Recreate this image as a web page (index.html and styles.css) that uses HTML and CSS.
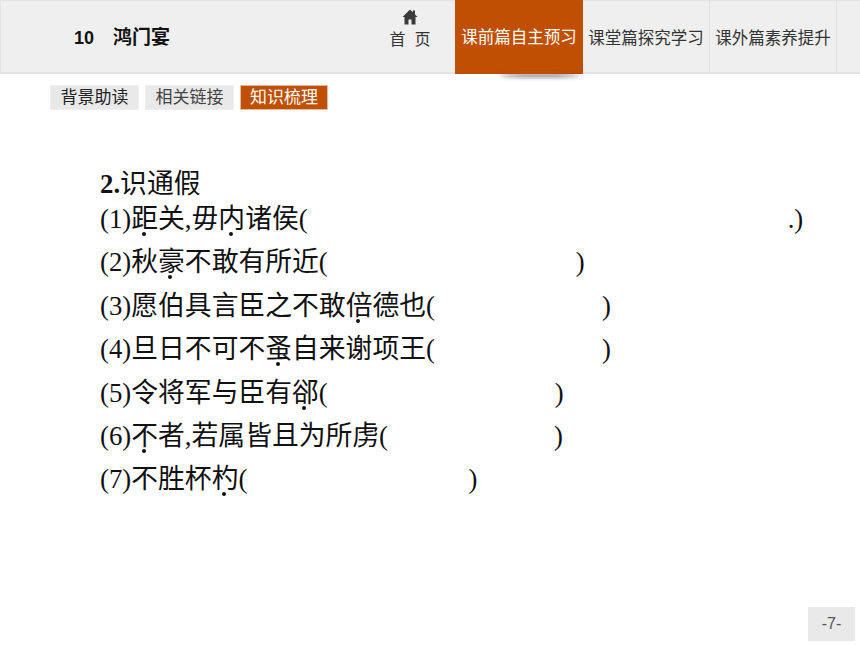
FILE: index.html
```html
<!DOCTYPE html>
<html lang="zh">
<head>
<meta charset="utf-8">
<title>鸿门宴</title>
<link rel="stylesheet" href="styles.css">
</head>
<body>
<header class="topbar">
  <div class="title"><span class="num">10</span><span>鸿门宴</span></div>
  <div class="home">
    <svg class="home-icon" viewBox="0 0 16 16" width="16" height="16"><path fill="#3a3a3a" d="M8 .5 .5 8h2v7.500h4V10.500h3v5h4V8h2L13 5.500V1.500h-2.200v1.800z"/></svg>
    <span class="home-label">首&nbsp;&nbsp;页</span>
  </div>
  <nav class="tabs">
    <div class="tab active">课前篇自主预习</div>
    <div class="tab">课堂篇探究学习</div>
    <div class="tab bordered">课外篇素养提升</div>
    <div class="tab-end"></div>
  </nav>
</header>
<div class="subtabs">
  <div class="subtab">背景助读</div>
  <div class="subtab muted">相关链接</div>
  <div class="subtab on">知识梳理</div>
</div>
<main class="content">
  <h2 class="heading"><b>2.</b>识通假</h2>
  <p class="line">(1)<i class="d">距</i>关,毋<i class="d">内</i>诸侯(<span class="blank b1"></span>.)</p>
  <p class="line">(2)秋<i class="d">豪</i>不敢有所近(<span class="blank b2"></span>)</p>
  <p class="line">(3)愿伯具言臣之不敢<i class="d">倍</i>德也(<span class="blank b3"></span>)</p>
  <p class="line">(4)旦日不可不<i class="d">蚤</i>自来谢项王(<span class="blank b3"></span>)</p>
  <p class="line">(5)令将军与臣有<i class="d">郤</i>(<span class="blank b5"></span>)</p>
  <p class="line">(6)<i class="d">不</i>者,若属皆且为所虏(<span class="blank b6"></span>)</p>
  <p class="line">(7)不胜杯<i class="d">杓</i>(<span class="blank b7"></span>)</p>
</main>
<div class="page">-7-</div>
</body>
</html>
```
FILE: styles.css
```css
* { box-sizing: border-box; }
html, body { margin: 0; padding: 0; }
body {
  width: 860px;
  height: 645px;
  background: #fff;
  font-family: "Liberation Sans", "Noto Sans CJK SC", sans-serif;
  overflow: hidden;
  position: relative;
}
.topbar {
  height: 74px;
  background: #efefef;
  border: 1px solid #e4e4e4;
  border-width: 1px 0 2px 1px;
  display: flex;
  align-items: stretch;
}
.title {
  width: 367px;
  padding: 22px 0 0 73px;
  font-size: 19px;
  line-height: 30px;
  font-weight: bold;
  color: #111;
  display: flex;
}
.num { width: 39px; font-size: 18px; }
.home {
  width: 87px;
  display: flex;
  flex-direction: column;
  align-items: center;
  padding-top: 8px;
  padding-right: 3px;
}
.home-icon { display: block; }
.home-label { font-size: 16px; line-height: 22px; color: #333; margin-top: 4px; }
.tabs { display: flex; flex: 1; }
.tab {
  width: 127px;
  margin-top: -1px;
  height: 73px;
  font-size: 16.500px;
  color: #333;
  display: flex;
  align-items: center;
  justify-content: center;
  border-right: 1px solid #e0e0e0;
  white-space: nowrap;
}
.tab.active {
  width: 128px;
  height: 74px;
  background: #c04f02;
  color: #fff;
  border-right: 0;
  padding-bottom: 2px;
  position: relative;
}
.tab.active::after {
  content: "";
  position: absolute;
  left: 40px;
  right: 6px;
  bottom: 0;
  height: 3px;
  border-radius: 50%;
  box-shadow: 4px 3px 4px rgba(0, 0, 0, .6);
}
.tab-end { flex: 1; }
.subtabs {
  display: flex;
  gap: 6px;
  margin: 11px 0 0 50px;
}
.subtab {
  width: 89px;
  height: 25px;
  background: #e9e9e9;
  border: 1px solid #eeeeee;
  font-size: 17px;
  line-height: 24px;
  text-align: center;
  color: #222;
}
.subtab.muted { color: #444; }
.subtab.on { width: 88px; background: #c04f02; border-color: #e0b9a0; color: #fff; }
.content {
  margin: 59px 0 0 100px;
  font-family: "Liberation Serif", "Noto Sans CJK SC", serif;
  font-size: 26.800px;
  color: #111;
  white-space: nowrap;
}
.heading {
  margin: 0;
  font-size: 26.800px;
  line-height: 30px;
  font-weight: normal;
  height: 30px;
}
.line { margin: 0; height: 43.400px; line-height: 43.400px; }
.line:nth-child(2) { margin-top: -1px; }
.d { font-style: normal; position: relative; }
.d::after {
  content: "";
  position: absolute;
  left: 50%;
  bottom: -2px;
  width: 4px;
  height: 4px;
  margin-left: -3px;
  border-radius: 50%;
  background: #111;
}
.blank { display: inline-block; }
.b1 { width: 480px; }
.b2 { width: 248px; }
.b3 { width: 167px; }
.b5 { width: 227px; }
.b6 { width: 166px; }
.b7 { width: 221px; }
.page {
  position: absolute;
  left: 808px;
  top: 607px;
  width: 47px;
  height: 34px;
  background: #e9e9e9;
  font-size: 16px;
  line-height: 34px;
  text-align: center;
  color: #555;
}
```
